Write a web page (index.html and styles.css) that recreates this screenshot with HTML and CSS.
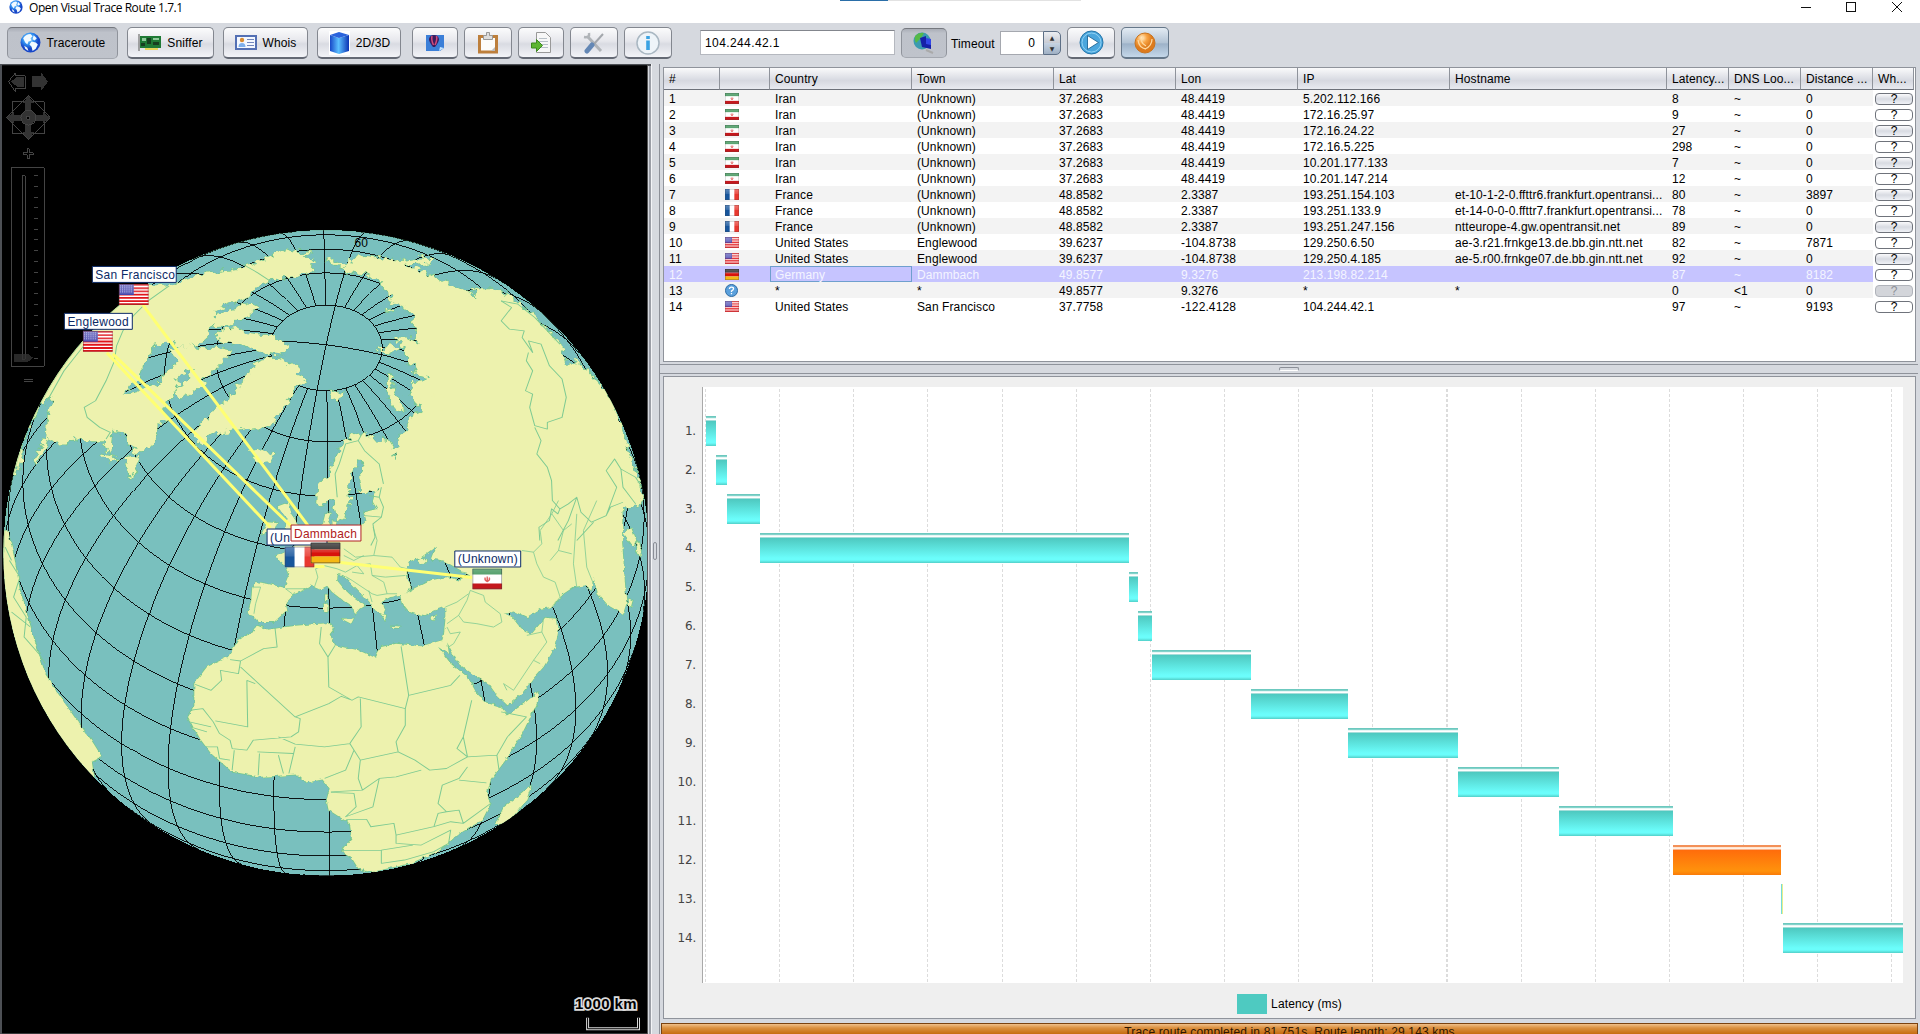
FILE: index.html
```html
<!DOCTYPE html>
<html lang="en">
<head>
<meta charset="utf-8">
<title>Open Visual Trace Route 1.7.1</title>
<link rel="stylesheet" href="styles.css">
</head>
<body>
<svg class="defs" width="0" height="0">
  <defs>
    <linearGradient id="gloss" x1="0" y1="0" x2="0" y2="1"><stop offset="0" stop-color="#fff" stop-opacity=".3"/><stop offset=".45" stop-color="#fff" stop-opacity=".12"/><stop offset=".5" stop-color="#fff" stop-opacity="0"/></linearGradient>
    <radialGradient id="blueBall" cx=".4" cy=".3"><stop offset="0" stop-color="#9fe0ff"/><stop offset=".6" stop-color="#2f8ef0"/><stop offset="1" stop-color="#1747c8"/></radialGradient>
    <radialGradient id="orangeBall" cx=".35" cy=".25"><stop offset="0" stop-color="#fff0cf"/><stop offset=".5" stop-color="#f8a445"/><stop offset="1" stop-color="#dd7a1c"/></radialGradient>
    <symbol id="flag-ir" viewBox="0 0 30 21" preserveAspectRatio="none"><path fill="#fff" d="M0 0h30v21H0z"/><path fill="#2f8b4c" d="M0 0h30v6H0z"/><path fill="#c4181d" d="M0 15h30v6H0z"/><path d="M13 9q-1 3 2 4 3-1 2-4M15 8v5" fill="none" stroke="#e0605f" stroke-width="1.5"/><path fill="url(#gloss)" stroke="#444" stroke-opacity=".5" d="M.5.5h29v20H.5z"/></symbol>
    <symbol id="flag-fr" viewBox="0 0 30 21" preserveAspectRatio="none"><path fill="#fff" d="M0 0h30v21H0z"/><path fill="#17559c" d="M0 0h10v21H0z"/><path fill="#e8382f" d="M20 0h10v21H20z"/><path fill="url(#gloss)" stroke="#444" stroke-opacity=".5" d="M.5.5h29v20H.5z"/></symbol>
    <symbol id="flag-de" viewBox="0 0 30 21" preserveAspectRatio="none"><path fill="#1c1a1a" d="M0 0h30v7H0z"/><path fill="#d8120c" d="M0 7h30v7H0z"/><path fill="#f5b814" d="M0 14h30v7H0z"/><path fill="url(#gloss)" stroke="#333" stroke-opacity=".7" d="M.5.5h29v20H.5z"/></symbol>
    <symbol id="flag-us" viewBox="0 0 30 21" preserveAspectRatio="none"><path fill="#fff" d="M0 0h30v21H0z"/><path stroke="#e0151b" stroke-width="1.9" d="M0 1h30M0 4.3h30M0 7.5h30M0 10.7h30M0 14h30M0 17.2h30M0 20.2h30"/><path fill="#4444ad" d="M0 0h15v11H0z"/><path stroke="#b9b9ea" stroke-dasharray="1 1.2" d="M1 2h13M1 4h13M1 6h13M1 8h13"/><path fill="url(#gloss)" stroke="#733" stroke-opacity=".5" d="M.5.5h29v20H.5z"/></symbol>
    <symbol id="flag-q" viewBox="0 0 14 14"><circle cx="7" cy="7" r="6.5" fill="#5aa0dc" stroke="#27659f"/><path d="M4.8 5.4q0-2 2.2-2t2.2 1.8q0 1.2-2.2 2.3v1M7 9.8v1.3" fill="none" stroke="#fff" stroke-width="1.4"/></symbol>
    <symbol id="globe" viewBox="0 0 20 20"><circle cx="10" cy="10" r="9.5" fill="url(#blueBall)"/><path fill="#f2faff" d="M3 6q3-4 7-4l2 2-2 2 1 2-3 1-1 3-2-2zM13 3l3 3-2 2-2-1zM11 9l4 1 2 2-2 4-3 2-1-4-2-2zM4 13l3 2 1 3-3-2z"/></symbol>
  </defs>
</svg>

<header class="titlebar">
  <svg class="app-icon" width="14" height="14"><use href="#globe" width="14" height="14"/></svg>
  <span class="app-title">Open Visual Trace Route 1.7.1</span>
  <span class="snap-bar"></span>
  <svg class="window-controls" width="102" height="14" fill="none" stroke="#111" shape-rendering="crispEdges"><path d="M0 7.5h10M45.5 2.5h9v9h-9z"/><path shape-rendering="auto" d="M91 2l10 10M101 2L91 12"/></svg>
</header>

<nav class="toolbar">
  <button class="btn w111 pressed"><svg width="22" height="22"><use href="#globe" width="21" height="21"/></svg>Traceroute</button>
  <button class="btn w87"><svg width="24" height="18"><path fill="#1f7a35" d="M2 2h21v12H2z"/><path fill="#8fc99a" d="M4 4h4v3H4zM15 4h6v2h-6z"/><path fill="#163f20" d="M9 4h4v6H9zM15 8h6v3h-6zM3 9h4v3H3z"/><path stroke="#888" stroke-width="1.5" d="M1 0v17"/><path fill="#e6d75a" d="M7 14h13v2H7z"/></svg>Sniffer</button>
  <button class="btn w85"><svg width="23" height="16"><path fill="#f4f8ff" stroke="#5470b4" stroke-width="2" d="M1 1h20v13H1z"/><circle cx="7" cy="5" r="2.2" fill="#d98c32"/><path fill="#7fb0ec" d="M3.500 12q0-4 3.500-4t3.500 4z"/><path stroke="#7287bd" d="M12 4.500h7M12 7.500h7M12 10.500h7"/></svg>Whois</button>
  <button class="btn w84"><svg width="23" height="24"><defs><linearGradient id="cube" x1="0" x2="1" y1="0" y2="0"><stop offset="0" stop-color="#1748c8"/><stop offset=".45" stop-color="#5cc0ff"/><stop offset="1" stop-color="#0c34b4"/></linearGradient></defs><path fill="#fff" d="M1 0h21v24H1z"/><path fill="url(#cube)" d="M2 4l9 3 10-3v16l-10 3-9-3z"/><path fill="#2a63dc" d="M2 4l9-3 10 3-10 3z"/></svg>2D/3D</button>
  <button class="btn w46 g1"><svg width="20" height="16"><path fill="#3b7fd8" d="M1 0h18v13l-4 3H1z"/><path fill="#3a1c5e" d="M4 4q1-4 5-4t5 4q0 3-4 8H8Q4 7 4 4z"/><path fill="none" stroke="#d44a7a" stroke-width="1.500" d="M7 1q-1 4 1.500 9M11.500 1q1 4-1.500 9"/><path fill="#c5e6ff" d="M14 16l1-4 4 1z"/></svg></button>
  <button class="btn w48 g2"><svg width="22" height="22"><path fill="#fcfcfa" stroke="#bd7f3c" stroke-width="3" d="M2.500 4.500h17v15.500h-17z"/><path fill="#ddd" stroke="#999" d="M6.500 3.500h3v-3h3v3h3v4h-9z"/><path fill="#bbb" d="M14 19l4-4v4z"/></svg></button>
  <button class="btn w46 g2"><svg width="21" height="22"><path fill="#f7f7f7" stroke="#999" d="M5.500.5h9l5 5v15h-14z"/><path stroke="#b8c0c8" d="M8 6.500h8M8 9.500h9M8 12.500h9M8 15.500h9"/><path fill="#5cb531" stroke="#3c8a1d" d="M.5 11h5V7.500l6 6-6 6V16h-5z"/></svg></button>
  <button class="btn w48 g2"><svg width="22" height="22"><path stroke="#b0b4b8" stroke-width="3" d="M5 5l13 14"/><path fill="none" stroke="#b0b4b8" stroke-width="2.500" d="M6 1q1 5-5 4"/><path stroke="#a3a7ac" stroke-width="2" d="M20 2l-9 10"/><path stroke="#6387b5" stroke-width="5" stroke-linecap="round" d="M9 13l-5 6"/></svg></button>
  <button class="btn w48 g2"><svg width="24" height="24"><circle cx="12" cy="12" r="11" fill="#eef4f9" stroke="#a9b7c2" stroke-width="1.500"/><path stroke="#3ba3e3" stroke-width="3.600" d="M12 9.500v9.500M12 5v3"/></svg></button>
  <input class="field host" value="104.244.42.1">
  <button class="btn w46 pressed dns"><svg width="24" height="24"><circle cx="10" cy="10" r="8.500" fill="#3c9bb0"/><path fill="#55b947" d="M3 5q4-4 9-3l-3 5-5 5q-2-3-1-7z"/><path fill="#1620a8" d="M8 7l6-2v8h5v5l-9-2z"/><path fill="#3246e8" d="M14 7l5 1v6l-5-1z"/><path stroke="#aaa" stroke-width="2" d="M14 19l7 3"/></svg></button>
  <label class="timeout-label">Timeout</label>
  <span class="spinner"><span class="spin-value">0</span><span class="spin-arrows"><i>▲</i><i>▼</i></span></span>
  <button class="btn w48 play"><svg width="25" height="25"><circle cx="12.500" cy="12.500" r="11.500" fill="#4aa6dd" stroke="#2474a8"/><circle cx="12.500" cy="12.500" r="9.500" fill="none" stroke="#8fd0f2" stroke-width="1"/><path fill="#fff" stroke="#2b6f9e" d="M8.500 5.500l11 7-11 7z"/></svg></button>
  <button class="btn w48 g2 blue"><svg width="22" height="22"><circle cx="11" cy="11" r="10" fill="url(#orangeBall)" stroke="#c9741f"/><path fill="none" stroke="#ffd9a0" stroke-width="1.300" d="M4 8q1 8 8 9M18 7q0 7-7 10M9 5q-4 5 3 9"/></svg></button>
</nav>

<main class="workspace">
<section class="map">
<svg width="646" height="970" viewBox="1 64 646 970">
  <defs>
    <clipPath id="disc"><circle cx="325.700" cy="552.400" r="323.300"/></clipPath>
    <filter id="rough" x="-5%" y="-5%" width="110%" height="110%"><feTurbulence type="fractalNoise" baseFrequency=".16" numOctaves="2" seed="4"/><feDisplacementMap in="SourceGraphic" scale="11" xChannelSelector="R" yChannelSelector="G"/></filter>
    <filter id="rough2" x="-5%" y="-5%" width="110%" height="110%"><feTurbulence type="fractalNoise" baseFrequency=".2" numOctaves="2" seed="9"/><feDisplacementMap in="SourceGraphic" scale="4" xChannelSelector="R" yChannelSelector="G"/></filter>
    <g id="north">
      <g transform="translate(0 220) scale(.42092 .33333)">
        <path d="M-40 200L350 195 420 188 480 160 560 145 610 125 640 105 680 85 700 92 740 95 720 105 745 120 735 132 748 150 700 165 640 178 600 205 590 225 560 240 530 255 510 265 505 295 500 320 495 345 480 362 455 372 430 378 400 365 370 370 350 405 335 440 330 475 310 490 288 522 330 510 375 485 412 468 422 490 400 530 385 570 397 592 375 610 370 640 358 672 340 690 320 695 305 665 290 635 265 630 260 700 240 665 200 665 175 650 150 675 112 655 105 690 80 735 90 690 108 650 112 600 122 520 90 560 60 630 45 720 40 760-40 760z"/>
        <path d="M236 700l24 6 26 12-30 4zM296 712l34-6-8 30-12 38-8-34z"/>
        <path d="M772 120L792 115 816 138 845 107 870 105 930 115 940 122 965 118 1000 110 1030 112 1020 125 975 130 955 127 965 138 985 140 1010 155 1025 165 1060 185 1095 206 1135 230 1120 205 1170 205 1210 225 1235 250 1260 275 1290 312 1310 340 1330 372 1340 400 1347 432 1370 430 1360 415 1385 432 1410 470 1440 510 1460 560 1470 600 1490 680 1510 740 1520 800 1528 850 1500 862 1478 860 1478 965 905 965 905 800 900 740 890 690 911 695 915 715 934 720 942 700 934 685 946 675 942 650 966 630 974 600 982 585 998 575 1000 562 974 520 982 500 974 480 998 480 1022 470 982 460 990 445 966 420 966 400 954 370 934 350 966 350 998 372 982 350 990 330 982 310 986 280 966 275 958 255 923 240 934 225 911 200 903 180 863 160 828 155z"/>
        <path d="M985 530l24 12 22 8 8-10-12-18 18-2 10 30-8 18-20-2-34-10z"/>
        <path d="M920 470l8-8 4 40 22 52 2 20-20-14-14-40z"/>
        <path d="M860 637L835 645 820 660 805 685 790 720 780 760 752 800 750 848 765 858 778 840 790 830 795 870 800 902 815 895 830 850 825 800 838 750 850 722 865 725 850 772 855 812 870 815 910 800 940 690 925 660 880 655z"/>
      </g>
      <g transform="translate(180 230) scale(.33333)">
        <path d="M218 400L240 383 290 378 320 395 360 408 350 430 380 450 345 465 330 500 310 525 300 545 262 595 225 590 150 600 90 612 60 640 48 625 45 600 80 560 110 525 150 500 172 465 200 440z"/>
        <path d="M208 662L240 655 277 675 270 695 235 700z"/>
        <path d="M445 485L490 480 475 505 468 520z"/>
        <path d="M130 240L210 215 238 228 200 255 170 268 150 285 98 290 95 262z"/>
        <path d="M108 305L170 290 200 310 280 318 320 345 310 372 250 365 200 350 160 336 118 332z"/>
        <path d="M-30 355L30 342 70 352 110 350 155 360 130 385 100 420 60 465 20 495-10 510-20 480 20 450 40 415 0 425-40 470-60 440-10 400z"/>
        <path d="M590 360l40-15 30 5-30 15zM615 240l15-8 5 8-10 6z"/>
      </g>
    </g>
    <g id="mid" transform="translate(230 480) scale(.33333)">
      <path d="M455-60L450 20 430 40 425 60 440 85 400 95 408 120 395 135 340 137 300 135 292 120 300 98 285 98 277 130 250 150 215 180 180 205 135 225 150 245 165 258 175 290 162 322 110 310 75 305 65 320 62 360 50 402 65 405 85 425 130 425 150 407 170 387 165 365 190 340 215 330 240 315 268 327 290 316 305 335 340 362 368 380 373 402 387 385 402 375 372 355 340 325 320 300 322 280 345 288 370 315 400 345 422 370 435 390 458 402 465 385 450 365 480 350 520 345 545 320 530 300 525 272 540 240 570 232 600 210 620 196 605 235 640 240 675 260 720 285 690 300 650 290 600 300 560 320 540 330 510 350 515 370 535 395 580 407 610 390 645 378 645 420 640 470 655 495 685 550 740 590 775 610 800 645 832 675 875 640 905 600 940 560 975 500 985 450 980 415 945 412 930 430 905 460 885 455 865 435 845 410 820 398 850 390 890 410 930 385 965 380 1000 340 1030 320 1065 315 1084 330 1090 290 1103 340 1135 375 1179 400 1189 370 1176 180 1180-60z"/>
      <path d="M560 240l20-8 8 10-12 12zM140 78L175 65 182 100 202 130 190 155 165 150 168 112zM112 122L140 125 130 150 92 162zM280 370h11v25h-10zM284 342h7v20h-7zM333 415L370 414 362 430zM484 437L512 438 510 443 486 442zM600 415L616 405 612 420zM450 400l18 4-4 18zM306 122l12 2-2 12-10-2z"/>
    </g>
    <g id="south" transform="translate(0 540) scale(.42092 .33333)">
      <path d="M610 256L635 268 660 263 700 256 780 248 792 265 782 282 795 315 850 330 890 352 905 320 940 310 1000 318 1050 300 1057 270 1066 340 1040 320 1070 370 1110 410 1130 455 1150 485 1190 500 1205 525 1245 490 1278 455 1275 490 1240 580 1200 660 1165 720 1155 765 1165 790 1145 840 1085 885 1045 930 975 970 880 997 850 985 835 955 810 935 835 895 830 850 780 810 775 780 782 745 765 718 725 727 705 703 620 710 550 695 500 640 470 590 445 530 460 500 460 430 490 380 540 350 565 300 600 275z"/>
      <path d="M1262 735L1250 780 1205 850 1178 852 1198 800 1240 760z"/>
      <path d="M-20-30L15-30 30 40 45 150 60 210 75 280 105 400 130 450 180 540 215 600 240 650 216 665 222 712-20 700z"/>
      <path d="M1495 175l8 5-4 18-8-6zM1515 0l8 20-2 30-8-20zM1480-20l20-20 12 40-8 20z"/>
    </g>
    <g id="land"><use href="#north" filter="url(#rough)"/><use href="#mid" filter="url(#rough2)"/><use href="#south" filter="url(#rough2)"/></g>
  </defs>
  <path d="M1 64h647v970H1z"/>
  <circle cx="325.700" cy="552.400" r="323.300" fill="#79c0be" shape-rendering="crispEdges"/>
  <g clip-path="url(#disc)">
    <path id="graticule" class="graticule"/>
    <use href="#land" class="coast"/>
    <use href="#land" class="ground"/>
    <g class="borders">
      <g transform="translate(0 220) scale(.42092 .33333)">
        <path d="M575 130L610 155 640 180M400 195L350 240 315 285 290 330 275 375 270 420 250 480 225 540 198 560 205 590 235 620 260 635 250 655M190 365L160 410 120 480M200 370L150 450 110 540"/>
        <path d="M1190 240L1215 260 1190 300 1210 325 1245 330 1240 350 1265 395 1255 360 1285 370 1305 435 1335 475 1345 530 1335 590 1300 605 1300 625 1270 615 1258 560 1265 520 1248 510 1265 450 1250 420 1255 395"/>
        <path d="M1190 240L1230 250 1270 290 1330 370M1270 620L1285 660 1275 700 1300 740 1310 780 1312 840 1330 865 1325 880 1310 865 1305 900 1280 920 1282 960M1330 865L1350 850 1370 830 1380 875 1405 905 1440 885 1450 860 1480 845M1440 885L1465 800 1440 750 1460 715 1475 745 1480 800 1510 850M1475 745L1510 770 1525 800M1370 830L1350 900 1325 960M1410 905L1370 960"/>
        <path d="M860 637L850 660 865 690 900 730 905 760 910 790M850 660L820 670 805 730 795 760 800 830M905 800L900 830 875 825M900 830L910 860 905 890 865 885M905 890L885 910 890 950 880 975"/>
      </g>
      <g transform="translate(230 480) scale(.33333)">
        <path d="M340 205L375 230 430 225 440 180 428 140M340 225L370 240 400 225M430 225L485 230 510 260 530 265M380 255L420 250 425 285 465 290 525 285M165 325L240 325M250 325L262 290 255 265 280 255 320 265 345 275 380 255 400 280 365 275M345 288L365 300 425 340 440 345 470 340 460 305 425 285M415 330L425 365M470 340L500 340M65 320L90 320 75 370 70 400M165 325L185 340"/>
        <path d="M675 270L710 278M720 330L710 360 685 405 650 430M720 330L760 345 765 365 810 400 815 425 790 440 740 430 700 425 685 405M645 380L680 365 715 340M650 440L660 460 690 455 670 490 655 500M875 210L910 215 920 250 940 290 975 305 990 350 965 380M910 215L935 190 930 150 965 100 1000 150 985 210 960 240M830 630L820 610 850 630 870 600 910 540 950 485 935 455 890 465M935 455L940 415M910 540L930 550"/>
        <path d="M1000 150l25-20M965 100l20-40M985 210l40 10M1040 100l-10 150 10 70M1100 60l-40 90 10 110 20 50"/>
      </g>
      <g transform="translate(0 540) scale(.42092 .33333)">
        <path d="M652 263L657 320 625 325 570 362 545 358M570 362L565 400 522 390 525 420 500 450 462 432M570 380L700 530 780 490 810 468 835 480 780 440 778 350 758 310 762 260M795 315L778 350M952 318L970 465 962 505 850 470 835 480M970 465L1070 435 1092 405M585 420L587 560 510 542M605 430L585 420M700 530L712 535 708 575 690 590 600 600 585 630 550 625 545 600 520 580 505 545 480 505 450 510M448 545L500 560M450 560L490 575M855 475L857 560 830 610 770 620 700 612 660 590M962 505L962 555 940 605 945 635 985 660 1020 690 1060 685 1110 650 1085 625 1100 590 1120 480M830 610L855 660 945 635M700 620L685 700M660 645L672 700M615 640L612 705M555 630L550 690M610 635L695 640M840 630L820 690 770 715M855 660L850 715 860 750 785 755M860 750L900 715 940 710 1000 690M785 757L840 760 845 800 820 830 885 800 900 715M822 838L870 838 880 860 935 850 940 885 1030 860 1040 820 1060 815 1040 790 1050 735 1090 715 1110 680M1090 720L1155 728M1100 590L1110 650 1180 645 1185 690M1110 650L1180 645 1205 590 1250 530 1190 515M1060 815L1090 810 1100 850 1070 845 1030 860M1100 850L1165 790M940 885L940 910 1000 915 1070 870 1065 910 1030 935M810 932L905 930 980 915M905 930L905 970 960 960 1030 935M490 620L515 620 520 655M520 655L545 660"/>
        <path d="M20 60L45 110 30 170 60 230 55 290 90 340 105 370M25 215L70 260M10 20L25 60"/>
      </g>
    </g>
    <path fill="none" stroke="#5fb36c" stroke-opacity=".35" d="M3 552a323 323 0 0 1 646 0"/>
  </g>
  <text x="354" y="246" class="lat-label">60</text>
  <g class="routes"><path d="M142 304L309 527M112 353L292 527M106 352L270 527M340 562L472 577M312 566h12"/></g>
  <g class="place"><path d="M91.500 265.500h84v16h-84zM63.500 312.500h68v16h-68zM266.500 528.500h60v16h-60zM454.500 550.500h66v16h-66z"/>
    <text x="94.500" y="278">San Francisco</text><text x="66.500" y="325">Englewood</text><text x="269.500" y="541">(Un</text><text x="457.500" y="563">(Unknown)</text></g>
  <use href="#flag-us" x="118" y="283" width="30" height="21"/>
  <use href="#flag-us" x="82" y="330" width="30" height="21"/>
  <use href="#flag-ir" x="472" y="568" width="30" height="21"/>
  <use href="#flag-fr" x="284" y="546" width="30" height="21"/>
  <use href="#flag-de" x="310" y="542" width="30" height="21"/>
  <g class="place selected"><path d="M290.500 524.500h70v16h-70z"/><text x="293.500" y="537">Dammbach</text></g>
  <g class="controls" transform="translate(-1 0)">
    <path d="M8.500 80.500l7-9v3h10v13h-10v3z"/><path class="solid" d="M11 80.500l6-5h7v10h-7zM32 75h9v-4l7 9.500-7 9.500v-4h-9z"/>
    <path d="M28.500 94.500l22 22-22 22-22-22zM12.500 100.500h32v32h-32z"/>
    <path class="solid" d="M28.500 95l6 7h-3v9h-6v-9h-3zM28.500 138l6-7h-3v-9h-6v9h-3zM7 116.500l7-6v3h8v6h-8v3zM50 116.500l-7-6v3h-8v6h8v3z"/>
    <circle class="solid" cx="28.500" cy="116.500" r="7"/><circle cx="28.500" cy="116.500" r="7.500"/><path fill="#000" d="M27 115h3v3h-3z"/>
    <path d="M27.500 147.500h2v4h4v2h-4v4h-2v-4h-4v-2h4zM11.500 166.500h33v199h-33zM22.500 174.500h3v184h-3zM24 378.500h9M24 380.500h9"/>
    <path d="M36 174v185" stroke-width="4" stroke-dasharray="1 9.750"/>
    <path class="solid" opacity=".8" d="M14 353h14l5 4-5 4H14z"/>
  </g>
  <text x="575" y="1009" class="scale-text">1000 km</text>
  <path d="M587.500 1018v11h51v-11" fill="none" stroke="#d8d8d8" stroke-width="3"/><path d="M587.500 1018v11h51v-11" fill="none" stroke="#000"/>
</svg>
</section>
<div class="v-split"><i></i></div>

<section class="right">
  <div class="table-pane">
  <table class="hops">
    <colgroup><col class="c56"><col class="c50"><col class="c142"><col class="c142"><col class="c122"><col class="c122"><col class="c152"><col class="c217"><col class="c62"><col class="c72"><col class="c72"><col class="c41"></colgroup>
    <thead><tr><th>#</th><th></th><th>Country</th><th>Town</th><th>Lat</th><th>Lon</th><th>IP</th><th>Hostname</th><th>Latency...</th><th>DNS Loo...</th><th>Distance ...</th><th>Wh...</th></tr></thead>
    <tbody id="hops"></tbody>
  </table>
  </div>
  <div class="h-split"><i></i></div>
  <div class="chart">
    <div class="chart-body"><div class="axis" id="axis"></div><div class="plot" id="plot"></div></div>
    <div class="legend"><span class="swatch"></span>Latency (ms)</div>
  </div>
  <div class="status">Trace route completed in 81.751s. Route length: 29,143 kms</div>
</section>
</main>
<script src="app.js"></script>
</body>
</html>
```
FILE: styles.css
```css
* { box-sizing: border-box; }
body { margin: 0; width: 1920px; height: 1034px; overflow: hidden; display: flex; flex-direction: column; background: #d6d9df; color: #000; font: 12px "Liberation Sans", Arial, sans-serif; letter-spacing: .12px; }
.defs { position: absolute; }
svg { display: block; flex: none; }

.titlebar { position: relative; height: 23px; flex: none; background: #fff; display: flex; align-items: flex-start; padding: 0 17px 0 9px; }
.app-title { margin-left: 6px; font: 12px/16px "Open Sans", "Noto Sans", sans-serif; letter-spacing: -.45px; }
.window-controls { margin-left: auto; }
.snap-bar { position: absolute; left: 840px; top: 0; width: 241px; height: 1px; background: linear-gradient(90deg, #2a6ea8 48px, #e2e2e2 48px); }

.toolbar { height: 41px; flex: none; display: flex; align-items: flex-start; padding: 4px 0 0 7px; }
.btn { height: 32px; margin: 0 9px 0 0; padding: 0; display: flex; align-items: center; justify-content: center; gap: 5px; font: inherit; letter-spacing: inherit; color: #000; border: 1px solid #83878f; border-bottom: 2px solid #646974; border-radius: 5px; background: linear-gradient(#fbfbfc, #e6e7ec 45%, #d9dbe2 55%, #f3f4f8); }
.btn.pressed { border-color: #75787f #8f939b #a4a8b0; border-bottom-width: 1px; background: linear-gradient(#a9adb6, #bec2ca 15%, #bfc3cb); }
.btn.blue { background: linear-gradient(#e3ebf3, #b3c4d5 50%, #9db2c8 55%, #c5d8ea); border-color: #66788a; }
.w111 { width: 111px; } .w87 { width: 87px; } .w85 { width: 85px; } .w84 { width: 84px; } .w46 { width: 46px; } .w48 { width: 48px; }
.btn.g1 { margin: 0 6px 0 2px; }
.btn.g2 { margin-right: 6px; }
.field { width: 195px; height: 25px; margin: 3px 6px 0 22px; padding: 0 4px; border: 1px solid #b5b8bf; border-top-color: #83868d; background: #fff; font: inherit; letter-spacing: .4px; }
.btn.dns { height: 30px; margin: 1px 4px 0 0; }
.timeout-label { width: 49px; line-height: 34px; }
.spinner { display: flex; width: 61px; height: 24px; margin: 4px 6px 0 0; }
.spin-value { flex: 1; background: #fff; border: 1px solid #a5a8af; border-right: 0; text-align: right; padding-right: 8px; line-height: 22px; }
.spin-arrows { width: 18px; border: 1px solid #5d6f86; border-radius: 0 5px 5px 0; background: linear-gradient(#eceef2, #c9ccd4 48%, #56687f 48%, #56687f 52%, #c5d2e1 52%, #9fb0c4); }
.spin-arrows i { display: block; font: 6px/11px "DejaVu Sans", sans-serif; text-align: center; letter-spacing: 0; color: #333; }
.btn.play { margin-right: 6px; }

.workspace { flex: 1; display: flex; min-height: 0; }
.map { width: 651px; padding-left: 2px; box-shadow: inset 2px 2px #4d5055, inset -2px 0 #9b9ea6; overflow: hidden; }
.map svg { border-top: 1px solid #4d5055; border-right: 1px solid #555; }
.v-split { width: 9px; background: #d6d9df; border-left: 1px solid #f3f4f7; border-right: 1px solid #8d9098; display: flex; align-items: center; justify-content: center; }
.v-split i { width: 4px; height: 18px; margin: 4px 2px 0 0; border: 1px solid #8a8e97; border-radius: 2px; }

.graticule { fill: none; stroke: #000; stroke-width: .9; shape-rendering: crispEdges; }
.coast { fill: #74c78c; stroke: #74c78c; stroke-width: 4; stroke-linejoin: round; }
.ground { fill: #edf2ae; }
.borders { fill: none; stroke: #7dca92; stroke-width: 2.4; stroke-linejoin: round; }
.lat-label { font: 12px "Liberation Sans", sans-serif; }
.routes { fill: none; stroke: #ffff73; stroke-width: 3; }
.place { fill: #fff; stroke: #0c2a66; }
.place text { fill: #0c2a66; stroke: none; font-size: 12px; letter-spacing: .25px; }
.place.selected { stroke: #b02020; }
.place.selected text { fill: #b02020; }
.controls { fill: none; stroke: #444; shape-rendering: crispEdges; }
.controls .solid { fill: #333; stroke: none; }
.scale-text { font: bold 15px "Liberation Sans", sans-serif; letter-spacing: .4px; fill: #000; stroke: #dcdcdc; stroke-width: 3.5px; paint-order: stroke; }

.right { flex: 1; min-width: 0; padding: 3px 4px 0 3px; display: flex; flex-direction: column; }
.table-pane { height: 295px; flex: none; border: 1px solid #8f939b; background: #fff; overflow: hidden; }
.hops { table-layout: fixed; width: 1250px; border-collapse: separate; border-spacing: 0; }
.c56 { width: 56px; } .c50 { width: 50px; } .c142 { width: 142px; } .c122 { width: 122px; } .c152 { width: 152px; } .c217 { width: 217px; } .c62 { width: 62px; } .c72 { width: 72px; } .c41 { width: 41px; }
.hops th { height: 22px; padding: 1px 0 0 5px; font-weight: normal; text-align: left; border-right: 1px solid #8f939b; border-bottom: 1px solid #6d717a; background: linear-gradient(#fafafb, #dcdee5 50%, #d6d8e0 60%, #e8eaf0); white-space: nowrap; overflow: hidden; }
.hops td { height: 16px; padding: 2px 0 0 5px; line-height: 14px; white-space: nowrap; overflow: hidden; text-overflow: clip; letter-spacing: .1px; }
.hops tr.odd td { background: #f3f3f3; }
.hops tr.sel td { background: #c6c4ff; color: #f4f4ff; }
.hops tr.sel .focus { box-shadow: inset 0 0 0 1px #6f9fce; }
.hops tr td.whois { background: #fff; padding: 2px 0 1px 2px; }
.hops td svg { margin-top: -2px; }
.ask { display: block; width: 38px; height: 12px; padding: 0; border: 1px solid #6f737b; border-radius: 4px; background: #fff; color: #000; font: 12px/10px "Liberation Sans", sans-serif; }
.odd .ask { background: linear-gradient(#fafafc, #d8dbe2 50%, #eff1f6); }
.odd .ask:disabled { background: #d3d5da; border-color: #b0b3ba; color: #8d9098; }

.h-split { height: 10px; flex: none; margin: 2px -2px 2px -3px; border-top: 1px solid #8f939b; border-bottom: 1px solid #8f939b; display: flex; align-items: flex-start; justify-content: center; padding-top: 2px; }
.h-split i { width: 20px; height: 4px; border: 1px solid #8a8e97; border-radius: 2px; border-bottom-color: #fff; }
.chart { height: 643px; flex: none; border: 1px solid #8f939b; background: #efefef; padding: 10px 12px 0 0; display: flex; flex-direction: column; }
.chart-body { display: flex; height: 596px; }
.axis { width: 39px; padding: 25px 6px 0 0; border-right: 1px solid #a9a9a9; font: 12px/39px "DejaVu Sans", sans-serif; letter-spacing: -.2px; color: #444; text-align: right; }
.plot { flex: 1; padding: 24px 0 0 3px; background: repeating-linear-gradient(#fff 0 2px, transparent 2px 5px), repeating-linear-gradient(90deg, #dcdcdc 0 1px, #fff 1px 74.15px) 2px 0; background-color: #fff; overflow: hidden; }
.row { height: 39px; padding-top: 5px; }
.bar { height: 30px; background: linear-gradient(#6cc9bf 0 1px, #84d2ca 1px 2px, #e6f7f5 2px 3px, #fff 3px 4px, #a5deda 4px 5px, #4ec8bf 5px, #6bfdfb 25px, #6bfdfb 27px, #52cfc8 30px); }
.bar.hot { background: linear-gradient(#f39058 0 2px, #ffe5d2 2px 3px, #fff0e4 3px 4px, #fbb48a 4px 5px, #ff6c0b 5px, #ff920c 26px, #fa7a08 30px); }
.bar.tiny { background: linear-gradient(90deg, #75dcd8 50%, #e9ef8c 50%); }
.legend { display: flex; align-items: center; justify-content: center; gap: 4px; height: 20px; margin-top: 11px; padding-left: 12px; }
.swatch { width: 30px; height: 20px; background: #4ecac1; }
.status { height: 22px; flex: none; margin: 4px -2px 0 -2px; border: 1px solid #7a4210; background: linear-gradient(#f0c08a, #da9040 4px, #c66c10 10px); text-align: center; line-height: 17px; color: #2e1600; letter-spacing: .15px; }
```
FILE: app.js
```js
const U = "(Unknown)";
const hops = [
  ["ir", "Iran", U, "37.2683", "48.4419", "5.202.112.166", "", "8", "~", "0"],
  ["ir", "Iran", U, "37.2683", "48.4419", "172.16.25.97", "", "9", "~", "0"],
  ["ir", "Iran", U, "37.2683", "48.4419", "172.16.24.22", "", "27", "~", "0"],
  ["ir", "Iran", U, "37.2683", "48.4419", "172.16.5.225", "", "298", "~", "0"],
  ["ir", "Iran", U, "37.2683", "48.4419", "10.201.177.133", "", "7", "~", "0"],
  ["ir", "Iran", U, "37.2683", "48.4419", "10.201.147.214", "", "12", "~", "0"],
  ["fr", "France", U, "48.8582", "2.3387", "193.251.154.103", "et-10-1-2-0.ffttr6.frankfurt.opentransi...", "80", "~", "3897"],
  ["fr", "France", U, "48.8582", "2.3387", "193.251.133.9", "et-14-0-0-0.ffttr7.frankfurt.opentransi...", "78", "~", "0"],
  ["fr", "France", U, "48.8582", "2.3387", "193.251.247.156", "ntteurope-4.gw.opentransit.net", "89", "~", "0"],
  ["us", "United States", "Englewood", "39.6237", "-104.8738", "129.250.6.50", "ae-3.r21.frnkge13.de.bb.gin.ntt.net", "82", "~", "7871"],
  ["us", "United States", "Englewood", "39.6237", "-104.8738", "129.250.4.185", "ae-5.r00.frnkge07.de.bb.gin.ntt.net", "92", "~", "0"],
  ["de", "Germany", "Dammbach", "49.8577", "9.3276", "213.198.82.214", "", "87", "~", "8182"],
  ["q", "*", "*", "49.8577", "9.3276", "*", "*", "0", "<1", "0"],
  ["us", "United States", "San Francisco", "37.7758", "-122.4128", "104.244.42.1", "", "97", "~", "9193"]
];
// Cumulative start of each bar, in plot pixels; the last value closes the chart.
const starts = [0, 10, 21, 54, 423, 432, 446, 545, 642, 752, 853, 967, 1075, 1077, 1197];

document.getElementById("hops").innerHTML = hops.map((h, i) => {
  const cls = i === 11 ? "sel" : i % 2 === 0 ? "odd" : "";
  const w = h[0] === "q" ? 13 : 14, t = h[0] === "q" ? 13 : 11;
  const cells = h.slice(1).map((v, k) => `<td${k === 0 ? ' class="focus"' : ""}>${v.replace("<", "&lt;")}</td>`).join("");
  return `<tr class="${cls}"><td>${i + 1}</td><td><svg width="${w}" height="${t}"><use href="#flag-${h[0]}" width="${w}" height="${t}" /></svg></td>${cells}<td class="whois"><button class="ask"${i === 12 ? " disabled" : ""}>?</button></td></tr>`;
}).join("");

document.getElementById("axis").innerHTML = hops.map((h, i) => `<div>${i + 1}.</div>`).join("");
document.getElementById("plot").innerHTML = hops.map((h, i) =>
  `<div class="row"><div class="bar${i === 11 ? " hot" : i === 12 ? " tiny" : ""}" style="margin-left:${starts[i]}px;width:${starts[i + 1] - starts[i]}px"></div></div>`).join("");

// Orthographic graticule, every 10 degrees, centred on the selected hop.
const R = 323.3, CX = 325.7, CY = 552.4, rad = Math.PI / 180, p0 = 49.8577 * rad, l0 = 9.3276 * rad;
let d = "";
function line(points) {
  let pen = false;
  for (const [lon, lat] of points) {
    const p = lat * rad, l = lon * rad - l0;
    const z = Math.sin(p0) * Math.sin(p) + Math.cos(p0) * Math.cos(p) * Math.cos(l);
    if (z < 0) { pen = false; continue; }
    const x = CX + R * Math.cos(p) * Math.sin(l);
    const y = CY - R * (Math.cos(p0) * Math.sin(p) - Math.sin(p0) * Math.cos(p) * Math.cos(l));
    d += (pen ? "L" : "M") + x.toFixed(1) + " " + y.toFixed(1);
    pen = true;
  }
}
for (let lon = -180; lon < 180; lon += 10) {
  const top = lon % 90 === 0 ? 90 : 80, pts = [];
  for (let lat = -80; lat <= top; lat += 2) pts.push([lon, lat]);
  line(pts);
}
for (let lat = -80; lat <= 80; lat += 10) {
  const pts = [];
  for (let lon = -180; lon <= 180; lon += 2) pts.push([lon, lat]);
  line(pts);
}
document.getElementById("graticule").setAttribute("d", d);
```
